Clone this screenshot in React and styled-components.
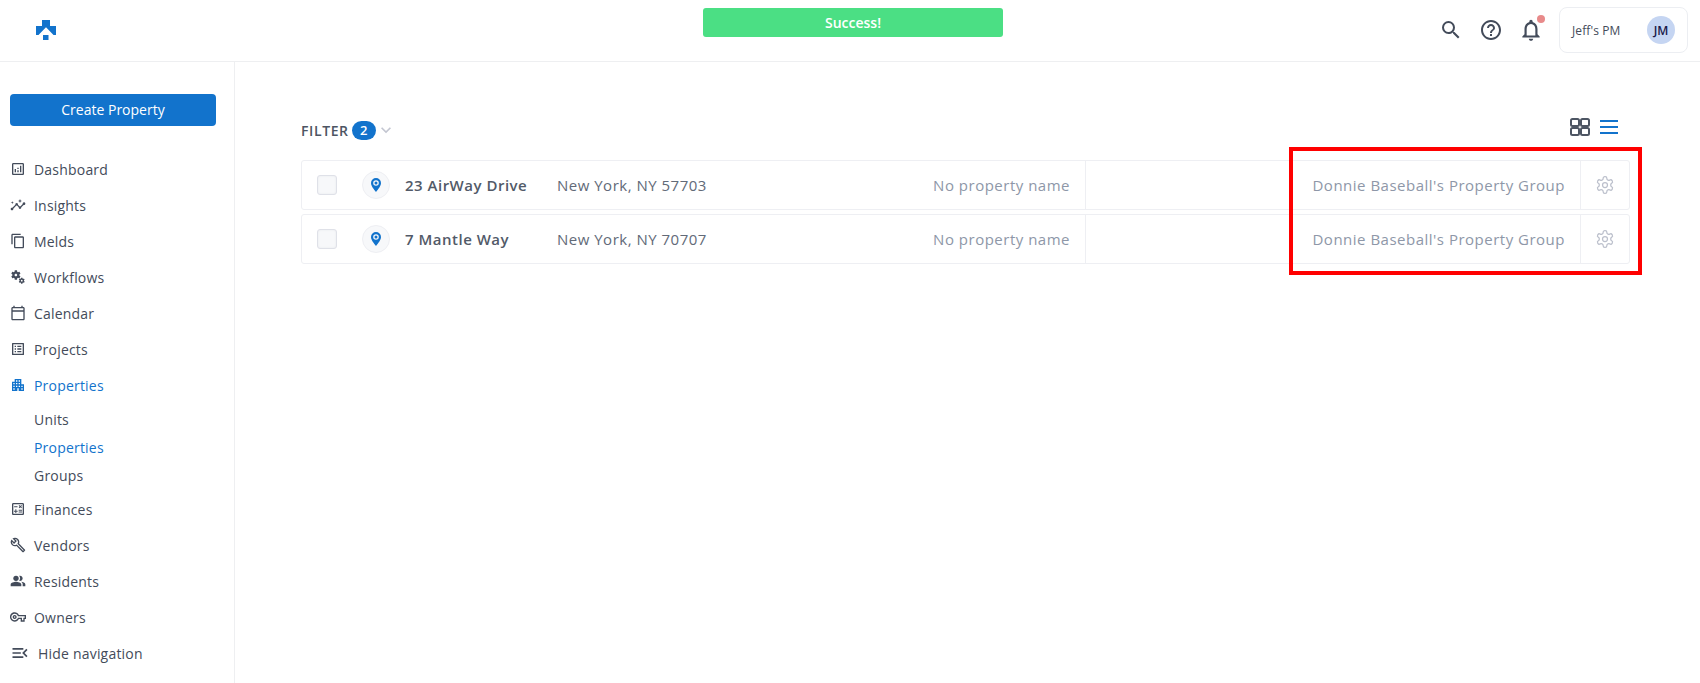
import React from "react";
import styled, { createGlobalStyle } from "styled-components";
import {
  MdOutlineAnalytics,
  MdOutlineInsights,
  MdContentCopy,
  MdMiscellaneousServices,
  MdOutlineCalendarToday,
  MdOutlineListAlt,
  MdApartment,
  MdOutlineCalculate,
  MdOutlineBuild,
  MdPeopleAlt,
  MdOutlineVpnKey,
  MdOutlineMenuOpen,
  MdSearch,
  MdHelpOutline,
  MdOutlineNotifications,
  MdKeyboardArrowDown,
} from "react-icons/md";
import { LuSettings } from "react-icons/lu";

const GlobalStyle = createGlobalStyle`
  html, body { margin: 0; padding: 0; background: #fff; }
  body { font-family: "Open Sans", "Liberation Sans", sans-serif; color: #434b5a; }
  * { box-sizing: border-box; }
`;

const navItems = [
  { label: "Dashboard", icon: MdOutlineAnalytics },
  { label: "Insights", icon: MdOutlineInsights },
  { label: "Melds", icon: MdContentCopy },
  { label: "Workflows", icon: MdMiscellaneousServices },
  { label: "Calendar", icon: MdOutlineCalendarToday },
  { label: "Projects", icon: MdOutlineListAlt },
  {
    label: "Properties",
    icon: MdApartment,
    active: true,
    children: [
      { label: "Units" },
      { label: "Properties", active: true },
      { label: "Groups" },
    ],
  },
  { label: "Finances", icon: MdOutlineCalculate },
  { label: "Vendors", icon: MdOutlineBuild },
  { label: "Residents", icon: MdPeopleAlt },
  { label: "Owners", icon: MdOutlineVpnKey },
];

const properties = [
  { name: "23 AirWay Drive", address: "New York, NY 57703" },
  { name: "7 Mantle Way", address: "New York, NY 70707" },
];

const App = () => {
  return (
    <Page>
      <GlobalStyle />
      <Header>
        <Logo viewBox="0 0 20 20">
          <path d="M6 0h8v6h6v9h-2.500L10 7.200 2.500 15H0V6h6z" fill="#1273cc" />
          <rect x="7" y="15" width="5.500" height="5" fill="#1273cc" />
        </Logo>
        <HeaderActions>
          <HeaderIcon>
            <MdSearch size={24} color="#434b5a" />
          </HeaderIcon>
          <HeaderIcon>
            <MdHelpOutline size={24} color="#434b5a" />
          </HeaderIcon>
          <HeaderIcon>
            <MdOutlineNotifications size={26} color="#434b5a" />
            <BellDot />
          </HeaderIcon>
          <AccountBox>
            <AccountName>Jeff's PM</AccountName>
            <Avatar>JM</Avatar>
          </AccountBox>
        </HeaderActions>
      </Header>
      <Toast>Success!</Toast>

      <Body>
        <Sidebar>
          <CreateButton>Create Property</CreateButton>
          <NavList>
            {navItems.map((item) => (
              <React.Fragment key={item.label}>
                <NavRow $active={item.active}>
                  <NavIcon>
                    <item.icon size={16} />
                  </NavIcon>
                  {item.label}
                </NavRow>
                {item.children && (
                  <SubList>
                    {item.children.map((child) => (
                      <SubRow key={child.label} $active={child.active}>
                        {child.label}
                      </SubRow>
                    ))}
                  </SubList>
                )}
              </React.Fragment>
            ))}
            <HideRow>
              <NavIcon>
                <MdOutlineMenuOpen size={20} />
              </NavIcon>
              Hide navigation
            </HideRow>
          </NavList>
        </Sidebar>

        <Main>
          <Toolbar>
            <FilterButton>
              FILTER
              <FilterCount>2</FilterCount>
              <MdKeyboardArrowDown size={20} color="#c3c6d1" />
            </FilterButton>
            <ViewToggles>
              <svg width="20" height="18" viewBox="0 0 20 18" fill="none" stroke="#4d5563" strokeWidth="2">
                <rect x="1" y="1" width="8" height="7" rx="1.5" />
                <rect x="11" y="1" width="8" height="7" rx="1.5" />
                <rect x="1" y="10" width="8" height="7" rx="1.5" />
                <rect x="11" y="10" width="8" height="7" rx="1.5" />
              </svg>
              <svg width="18" height="14" viewBox="0 0 18 14" fill="#1273cc">
                <rect y="0" width="18" height="2" />
                <rect y="6" width="18" height="2" />
                <rect y="12" width="18" height="2" />
              </svg>
            </ViewToggles>
          </Toolbar>

          <RowList>
            {properties.map((property) => (
              <PropertyRow key={property.name}>
                <Checkbox />
                <PinCircle>
                  <svg width="10" height="14" viewBox="0 0 10 14">
                    <path
                      fillRule="evenodd"
                      d="M5 0a5 5 0 0 1 5 5c0 3-3 6.400-5 9C3 11.400 0 8 0 5a5 5 0 0 1 5-5zm0 2.200a2.800 2.800 0 1 0 0 5.600 2.800 2.800 0 0 0 0-5.600z"
                      fill="#1273cc"
                    />
                    <circle cx="5" cy="5" r="1.500" fill="#1273cc" />
                  </svg>
                </PinCircle>
                <PropertyName>{property.name}</PropertyName>
                <Address>{property.address}</Address>
                <NameCell>No property name</NameCell>
                <GroupCell>Donnie Baseball's Property Group</GroupCell>
                <GearCell>
                  <LuSettings size={20} color="#bcc0cc" strokeWidth={1.5} />
                </GearCell>
              </PropertyRow>
            ))}
          </RowList>
        </Main>
      </Body>

      <Highlight />
    </Page>
  );
};

const Page = styled.div`
  position: relative;
  width: 100%;
  height: 683px;
  overflow: hidden;
`;

const Header = styled.header`
  height: 62px;
  border-bottom: 1px solid #eeeff1;
  display: flex;
  align-items: center;
  justify-content: space-between;
  padding: 0 12px 1px 36px;
`;

const Logo = styled.svg`
  width: 20px;
  height: 20px;
`;

const HeaderActions = styled.div`
  display: flex;
  align-items: center;
`;

const HeaderIcon = styled.div`
  position: relative;
  width: 40px;
  display: flex;
  justify-content: center;
`;

const BellDot = styled.span`
  position: absolute;
  top: -2px;
  right: 6px;
  width: 8px;
  height: 8px;
  border-radius: 50%;
  background: #e88a8a;
`;

const AccountBox = styled.div`
  width: 129px;
  height: 46px;
  margin-left: 8px;
  border: 1px solid #eceef2;
  border-radius: 8px;
  display: flex;
  align-items: center;
  justify-content: space-between;
  padding: 0 12px;
`;

const AccountName = styled.span`
  font-size: 12px;
  letter-spacing: 0.1px;
  color: #434b5a;
`;

const Avatar = styled.div`
  width: 28px;
  height: 28px;
  border-radius: 50%;
  background: #c5d5f2;
  color: #1a1a4a;
  font-size: 12px;
  font-weight: 600;
  display: flex;
  align-items: center;
  justify-content: center;
`;

const Toast = styled.div`
  position: absolute;
  top: 8px;
  left: 703px;
  width: 300px;
  height: 29px;
  padding-bottom: 1px;
  border-radius: 3px;
  background: #4bdf84;
  color: #fff;
  font-size: 14px;
  font-weight: 600;
  display: flex;
  align-items: center;
  justify-content: center;
`;

const Body = styled.div`
  display: flex;
  height: 621px;
`;

const Sidebar = styled.aside`
  width: 235px;
  flex-shrink: 0;
  border-right: 1px solid #eeeff1;
  padding: 32px 18px 0 10px;
`;

const CreateButton = styled.button`
  display: block;
  width: 206px;
  height: 32px;
  padding: 0 0 2px;
  border: none;
  border-radius: 4px;
  background: #1273cc;
  color: #fff;
  font-family: inherit;
  font-size: 14px;
  font-weight: 500;
`;

const NavList = styled.nav`
  margin-top: 25px;
  display: flex;
  flex-direction: column;
`;

const NavRow = styled.div`
  height: 36px;
  display: flex;
  align-items: center;
  font-size: 14px;
  font-weight: 500;
  letter-spacing: 0.2px;
  color: ${(props) => (props.$active ? "#1273cc" : "#434b5a")};
`;

const HideRow = styled(NavRow)`
  gap: 4px;
`;

const NavIcon = styled.span`
  width: 24px;
  display: flex;
  align-items: center;
  color: inherit;
`;

const SubList = styled.div`
  display: flex;
  flex-direction: column;
  padding: 2px 0 2px 24px;
`;

const SubRow = styled.div`
  height: 28px;
  display: flex;
  align-items: center;
  font-size: 14px;
  font-weight: 500;
  letter-spacing: 0.2px;
  color: ${(props) => (props.$active ? "#1273cc" : "#434b5a")};
`;

const Main = styled.main`
  flex: 1;
  padding: 54px 70px 0 66px;
`;

const Toolbar = styled.div`
  height: 44px;
  display: flex;
  align-items: flex-start;
  justify-content: space-between;
`;

const FilterButton = styled.div`
  display: flex;
  align-items: center;
  height: 26px;
  margin-top: 1px;
  font-size: 14px;
  font-weight: 600;
  letter-spacing: 0.6px;
  color: #4d5563;
`;

const FilterCount = styled.span`
  width: 24px;
  height: 19px;
  margin-left: 3px;
  border-radius: 10px;
  background: #1273cc;
  color: #fff;
  font-size: 13px;
  font-weight: 600;
  letter-spacing: 0;
  display: flex;
  align-items: center;
  justify-content: center;
`;

const ViewToggles = styled.div`
  display: flex;
  align-items: center;
  gap: 10px;
  margin: 2px 12px 0 0;
`;

const RowList = styled.div`
  display: flex;
  flex-direction: column;
  gap: 4px;
`;

const PropertyRow = styled.div`
  height: 50px;
  border: 1px solid #eeeff3;
  border-radius: 3px;
  display: flex;
  align-items: center;
  padding-left: 15px;
`;

const Checkbox = styled.span`
  width: 20px;
  height: 20px;
  border: 1px solid #dfe1e8;
  border-radius: 3px;
  background: #f7f8fa;
  box-shadow: inset 0 0 2px #e4e6ec;
  flex-shrink: 0;
`;

const PinCircle = styled.span`
  width: 28px;
  height: 28px;
  margin-left: 25px;
  border: 1px solid #eeeff3;
  border-radius: 50%;
  background: #f7f8fa;
  display: flex;
  align-items: center;
  justify-content: center;
  flex-shrink: 0;
`;

const PropertyName = styled.span`
  width: 152px;
  margin-left: 15px;
  font-size: 15px;
  font-weight: 600;
  letter-spacing: 0.5px;
  color: #525a68;
`;

const Address = styled.span`
  font-size: 15px;
  letter-spacing: 0.5px;
  color: #626a78;
`;

const NameCell = styled.span`
  margin-left: auto;
  width: 170px;
  height: 100%;
  padding-right: 15px;
  border-right: 1px solid #eeeff3;
  display: flex;
  align-items: center;
  justify-content: flex-end;
  font-size: 15px;
  letter-spacing: 0.5px;
  color: #8e97a8;
  flex-shrink: 0;
`;

const GroupCell = styled.span`
  width: 494px;
  height: 100%;
  padding-right: 15px;
  display: flex;
  align-items: center;
  justify-content: flex-end;
  font-size: 15px;
  letter-spacing: 0.5px;
  color: #8e97a8;
  flex-shrink: 0;
`;

const GearCell = styled.span`
  width: 49px;
  height: 100%;
  border-left: 1px solid #eeeff3;
  display: flex;
  align-items: center;
  justify-content: center;
  flex-shrink: 0;
`;

const Highlight = styled.div`
  position: absolute;
  left: 1289px;
  top: 147px;
  width: 353px;
  height: 128px;
  border: 4px solid #ff0000;
  pointer-events: none;
`;

export default App;
